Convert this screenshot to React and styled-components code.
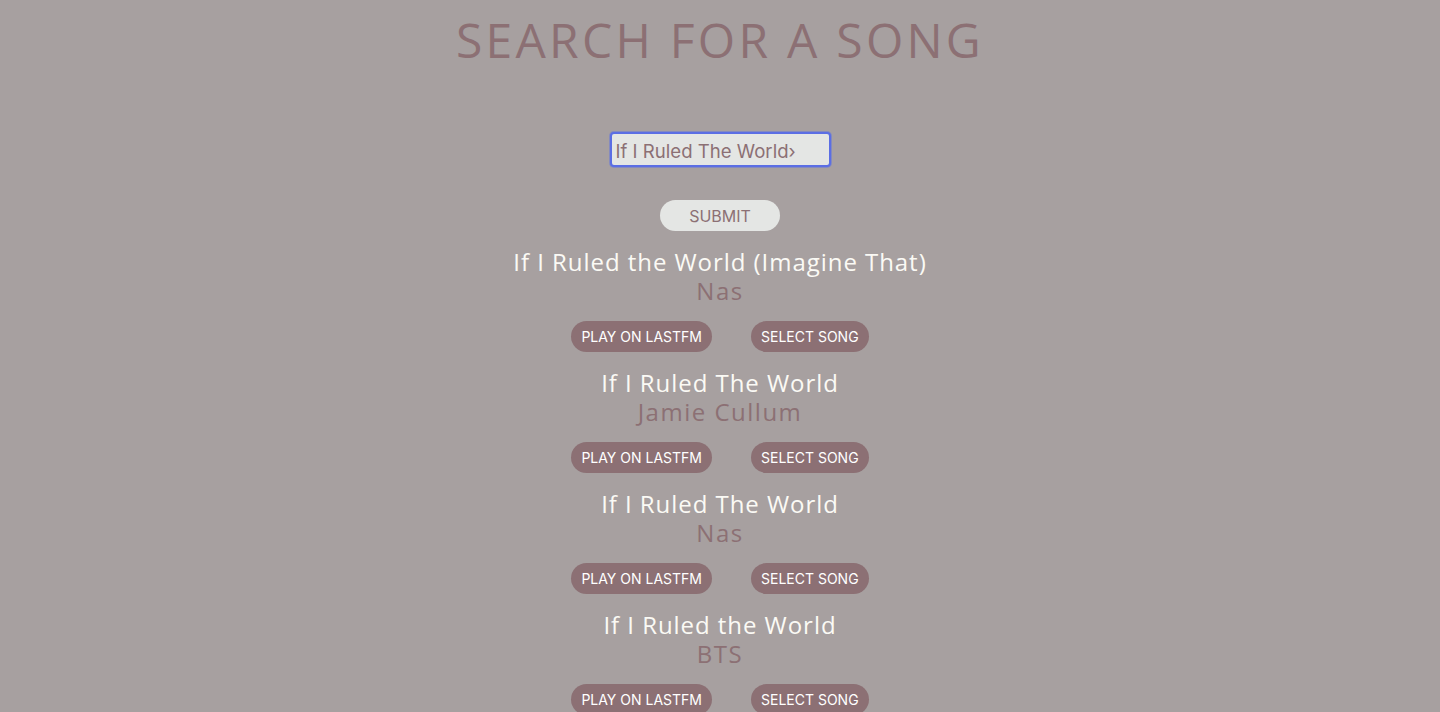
import React, { useState } from 'react';
import styled, { createGlobalStyle } from 'styled-components';

const GlobalStyle = createGlobalStyle`
  html, body {
    margin: 0;
    padding: 0;
    background: #a7a0a0;
  }
  body {
    font-family: "Open Sans", "Liberation Sans", sans-serif;
  }
`;

const Page = styled.div`
  display: flex;
  flex-direction: column;
  align-items: center;
  min-height: 712px;
  background: #a7a0a0;
`;

const Title = styled.h1`
  margin: 10px 0 0;
  font-family: "Open Sans", sans-serif;
  font-weight: 400;
  font-size: 48px;
  line-height: 60px;
  letter-spacing: 3.25px;
  color: #8c7074;
`;

const Form = styled.form`
  display: flex;
  flex-direction: column;
  align-items: center;
  margin-top: 62px;
`;

const SearchInput = styled.input`
  box-sizing: border-box;
  width: 221px;
  height: 35px;
  padding: 3px 4px 0;
  border: 2px solid #5b6ee4;
  border-radius: 4px;
  box-shadow: 0 0 0 1px rgba(91, 110, 228, 0.45);
  background: #e4e6e4;
  color: #8c7074;
  font-family: Inter, "Liberation Sans", sans-serif;
  font-size: 18.6px;
  outline: none;
`;

const SubmitButton = styled.button`
  margin-top: 33px;
  width: 120px;
  height: 31px;
  border: none;
  border-radius: 16px;
  background: #e4e6e4;
  color: #8c7074;
  font-family: Inter, "Liberation Sans", sans-serif;
  font-size: 16px;
  text-transform: uppercase;
  cursor: pointer;
`;

const Results = styled.div`
  display: flex;
  flex-direction: column;
  align-items: center;
  margin-top: 16px;
`;

const Song = styled.div`
  display: flex;
  flex-direction: column;
  align-items: center;
  height: 121px;
`;

const SongName = styled.div`
  font-family: "Open Sans", sans-serif;
  font-size: 24px;
  line-height: 29px;
  letter-spacing: 0.95px;
  color: #fbfaf5;
`;

const Artist = styled.div`
  font-family: "Open Sans", sans-serif;
  font-size: 24px;
  line-height: 29px;
  letter-spacing: 1.5px;
  color: #8c7074;
`;

const Actions = styled.div`
  display: flex;
  gap: 39px;
  margin-top: 16px;
`;

const ActionButton = styled.button`
  height: 31px;
  padding: 0 10px;
  border: none;
  border-radius: 16px;
  background: #8c7074;
  color: #ffffff;
  font-family: Inter, "Liberation Sans", sans-serif;
  font-size: 14px;
  text-transform: uppercase;
  cursor: pointer;
`;

const songs = [
  { name: 'If I Ruled the World (Imagine That)', artist: 'Nas' },
  { name: 'If I Ruled The World', artist: 'Jamie Cullum' },
  { name: 'If I Ruled The World', artist: 'Nas' },
  { name: 'If I Ruled the World', artist: 'BTS' },
];

const App = () => {
  const [query, setQuery] = useState('If I Ruled The World›');
  return (
    <Page>
      <GlobalStyle />
      <Title>SEARCH FOR A SONG</Title>
      <Form onSubmit={(e) => e.preventDefault()}>
        <SearchInput value={query} onChange={(e) => setQuery(e.target.value)} />
        <SubmitButton type="submit">Submit</SubmitButton>
      </Form>
      <Results>
        {songs.map((song, i) => (
          <Song key={i}>
            <SongName>{song.name}</SongName>
            <Artist>{song.artist}</Artist>
            <Actions>
              <ActionButton>Play on lastfm</ActionButton>
              <ActionButton>Select song</ActionButton>
            </Actions>
          </Song>
        ))}
      </Results>
    </Page>
  );
};

export default App;
